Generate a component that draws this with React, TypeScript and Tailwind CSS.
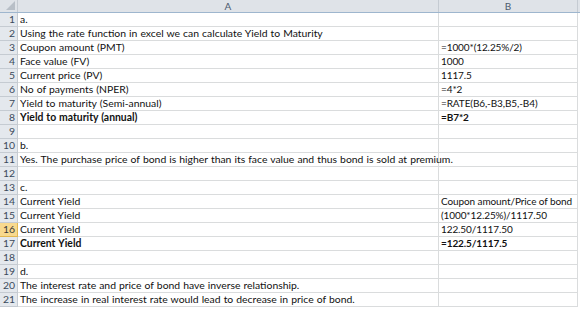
const rows: { a?: string; b?: string; bold?: boolean }[] = [
  { a: 'a.' },
  { a: 'Using the rate function in excel we can calculate Yield to Maturity' },
  { a: 'Coupon amount (PMT)', b: '=1000*(12.25%/2)' },
  { a: 'Face value (FV)', b: '1000' },
  { a: 'Current price (PV)', b: '1117.5' },
  { a: 'No of payments (NPER)', b: '=4*2' },
  { a: 'Yield to maturity (Semi-annual)', b: '=RATE(B6,-B3,B5,-B4)' },
  { a: 'Yield to maturity (annual)', b: '=B7*2', bold: true },
  {},
  { a: 'b.' },
  { a: 'Yes. The purchase price of bond is higher than its face value and thus bond is sold at premium.' },
  {},
  { a: 'c.' },
  { a: 'Current Yield', b: 'Coupon amount/Price of bond' },
  { a: 'Current Yield', b: '(1000*12.25%)/1117.50' },
  { a: 'Current Yield', b: '122.50/1117.50' },
  { a: 'Current Yield', b: '=122.5/1117.5', bold: true },
  {},
  { a: 'd.' },
  { a: 'The interest rate and price of bond have inverse relationship.' },
  { a: 'The increase in real interest rate would lead to decrease in price of bond.' },
]

export default function App() {
  return (
    <div className="w-[580px] h-[309px] overflow-hidden bg-white text-[10.4px] text-[#111] font-['Lato','Open_Sans',sans-serif]">
      <div className="flex h-[13px] bg-[#dfe3e8] border-b border-[#9eb6ce]">
        <div className="w-[18px] border-r border-[#c5cbd2] relative">
          <div className="absolute right-[2px] bottom-[2px] w-0 h-0 border-l-[9px] border-l-transparent border-b-[9px] border-b-[#b8bfc7]" />
        </div>
        <div className="w-[421px] border-r border-[#c5cbd2] flex items-center justify-center text-[#4c5b6e] text-[10px]">A</div>
        <div className="w-[139px] border-r border-[#c5cbd2] flex items-center justify-center text-[#4c5b6e] text-[10px]">B</div>
      </div>
      {rows.map((r, i) => {
        const sel = i === 15
        return (
          <div key={i} className={`flex h-[14px] leading-[13px] ${r.bold ? 'font-bold' : ''}`}>
            <div
              className={`w-[18px] shrink-0 border-r border-b text-right pr-[2px] font-normal ${
                sel
                  ? 'bg-[#f8d98e] border-[#e2b74f] text-[#3a3a3a]'
                  : 'bg-[#e4e8ed] border-[#c5cbd2] text-[#3b4a5c]'
              }`}
            >
              {i + 1}
            </div>
            <div className="w-[421px] shrink-0 border-r border-b border-[#dadcdd] pl-[2px] whitespace-nowrap [word-spacing:0.4px]">
              {r.a}
            </div>
            <div className="w-[139px] shrink-0 border-r border-b border-[#dadcdd] pl-[2px] whitespace-nowrap text-[10px] tracking-[-0.1px]">
              {r.b}
            </div>
          </div>
        )
      })}
    </div>
  )
}
